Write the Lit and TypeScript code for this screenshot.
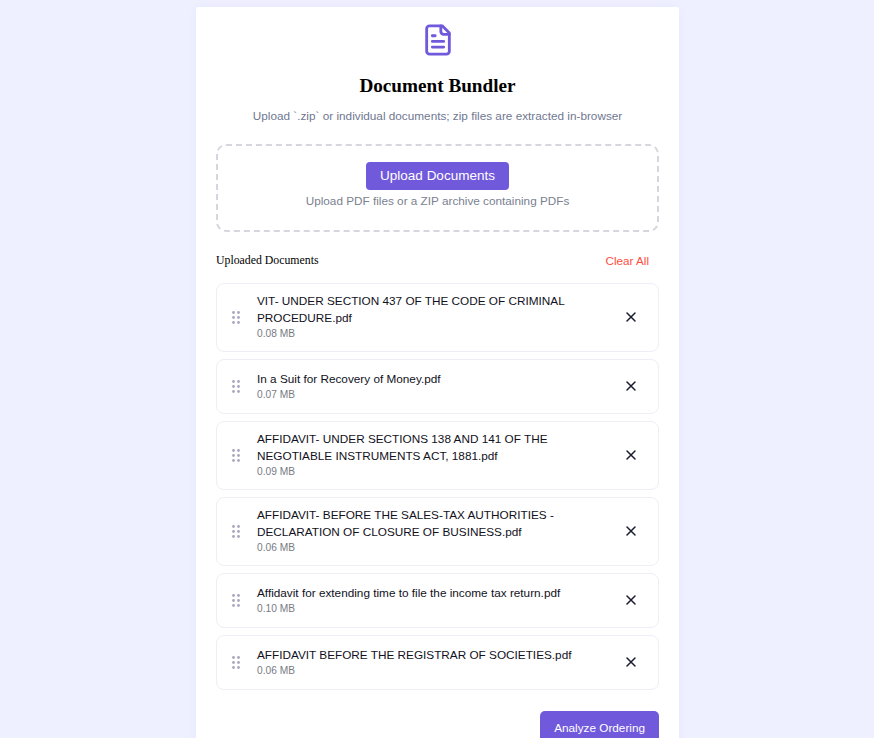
import { LitElement, html, css, svg } from "lit";
import { customElement } from "lit/decorators.js";

const DOCS: [string, string][] = [
  ["VIT- UNDER SECTION 437 OF THE CODE OF CRIMINAL PROCEDURE.pdf", "0.08 MB"],
  ["In a Suit for Recovery of Money.pdf", "0.07 MB"],
  ["AFFIDAVIT- UNDER SECTIONS 138 AND 141 OF THE NEGOTIABLE INSTRUMENTS ACT, 1881.pdf", "0.09 MB"],
  ["AFFIDAVIT- BEFORE THE SALES-TAX AUTHORITIES - DECLARATION OF CLOSURE OF BUSINESS.pdf", "0.06 MB"],
  ["Affidavit for extending time to file the income tax return.pdf", "0.10 MB"],
  ["AFFIDAVIT BEFORE THE REGISTRAR OF SOCIETIES.pdf", "0.06 MB"],
];

const grip = svg`<circle cx="1.5" cy="1.5" r="1.4"/><circle cx="6.5" cy="1.5" r="1.4"/><circle cx="1.5" cy="6.5" r="1.4"/><circle cx="6.5" cy="6.5" r="1.4"/><circle cx="1.5" cy="11.5" r="1.4"/><circle cx="6.5" cy="11.5" r="1.4"/>`;

@customElement("app-root")
export class AppRoot extends LitElement {
  static styles = css`
    :host {
      display: block;
      height: 738px;
      overflow: hidden;
      background: #eff0ff;
      padding-top: 7px;
      box-sizing: border-box;
      font-family: "Liberation Sans", Arial, sans-serif;
    }
    .card {
      box-sizing: border-box;
      width: 483px;
      margin-left: 196px;
      height: 760px;
      background: #fff;
      padding: 16px 20px 20px;
      box-shadow: 0 0 12px rgba(108, 92, 231, 0.06);
      border-radius: 2px;
    }
    .logo { display: block; margin: 0 auto; width: 34px; height: 34px; color: #7159dc; }
    h1 {
      margin: 17px 0 0;
      font: bold 19.2px/24px "Liberation Serif", "Times New Roman", serif;
      color: #000;
      text-align: center;
    }
    .sub {
      margin: 9px 0 0;
      font-size: 11.78px;
      line-height: 18px;
      color: #6f7791;
      text-align: center;
    }
    .drop {
      margin-top: 19px;
      height: 88px;
      box-sizing: border-box;
      border: 2px dashed #d6d6de;
      border-radius: 10px;
      display: flex;
      flex-direction: column;
      align-items: center;
      padding-top: 16px;
    }
    .upload {
      height: 28px;
      padding: 0 14px 1px;
      border: none;
      border-radius: 4px;
      background: #7159dc;
      color: #fff;
      font: 13.5px "Liberation Sans", Arial, sans-serif;
    }
    .hint { margin-top: 3px; font-size: 11.75px; line-height: 16px; color: #7a7f90; }
    .head {
      display: flex;
      justify-content: space-between;
      align-items: center;
      margin-top: 16px;
      height: 24px;
    }
    .head h2 {
      margin: 0;
      font: normal 11.8px "Liberation Serif", "Times New Roman", serif;
      color: #000;
    }
    .clear {
      border: none;
      background: none;
      padding: 0 10px;
      color: #ff4d42;
      font: 11.7px "Liberation Sans", Arial, sans-serif;
    }
    .list { margin-top: 11px; display: flex; flex-direction: column; gap: 7px; }
    .item {
      display: flex;
      align-items: center;
      box-sizing: border-box;
      min-height: 55px;
      padding: 8px 20px 11px 15px;
      border: 1px solid #eeeef6;
      border-radius: 8px;
      background: #fff;
    }
    .grip { width: 8px; height: 13px; fill: #a9a7bd; flex: none; margin-right: 17px; margin-top: 3px; }
    .info { flex: 1; min-width: 0; padding-right: 40px; }
    .name { font-size: 11.77px; line-height: 17px; color: #111122; }
    .size { margin-top: 2px; font-size: 10.2px; line-height: 12px; color: #777a84; }
    .x { width: 14px; height: 14px; flex: none; margin-top: 1px; stroke: #1a1a2e; stroke-width: 1.5; fill: none; stroke-linecap: round; }
    .foot { display: flex; justify-content: flex-end; margin-top: 21px; }
    .analyze {
      height: 32px;
      padding: 0 14px;
      border: none;
      border-radius: 5px;
      background: #7159dc;
      color: #fff;
      font: 11.75px "Liberation Sans", Arial, sans-serif;
    }
  `;

  render() {
    return html`
      <div class="card">
        <svg class="logo" viewBox="0 0 24 24" fill="none" stroke="currentColor" stroke-width="2" stroke-linecap="round" stroke-linejoin="round">
          <path d="M15 2H6a2 2 0 0 0-2 2v16a2 2 0 0 0 2 2h12a2 2 0 0 0 2-2V7Z"/>
          <path d="M14 2v4a2 2 0 0 0 2 2h4"/>
          <path d="M10 9H8M16 13H8M16 17H8"/>
        </svg>
        <h1>Document Bundler</h1>
        <p class="sub">Upload \`.zip\` or individual documents; zip files are extracted in-browser</p>
        <div class="drop">
          <button class="upload">Upload Documents</button>
          <div class="hint">Upload PDF files or a ZIP archive containing PDFs</div>
        </div>
        <div class="head">
          <h2>Uploaded Documents</h2>
          <button class="clear">Clear All</button>
        </div>
        <div class="list">
          ${DOCS.map(
            ([n, s]) => html`
              <div class="item">
                <svg class="grip" viewBox="0 0 8 13">${grip}</svg>
                <div class="info">
                  <div class="name">${n}</div>
                  <div class="size">${s}</div>
                </div>
                <svg class="x" viewBox="0 0 14 14"><path d="M3 3l8 8M11 3l-8 8"/></svg>
              </div>
            `
          )}
        </div>
        <div class="foot"><button class="analyze">Analyze Ordering</button></div>
      </div>
    `;
  }
}
